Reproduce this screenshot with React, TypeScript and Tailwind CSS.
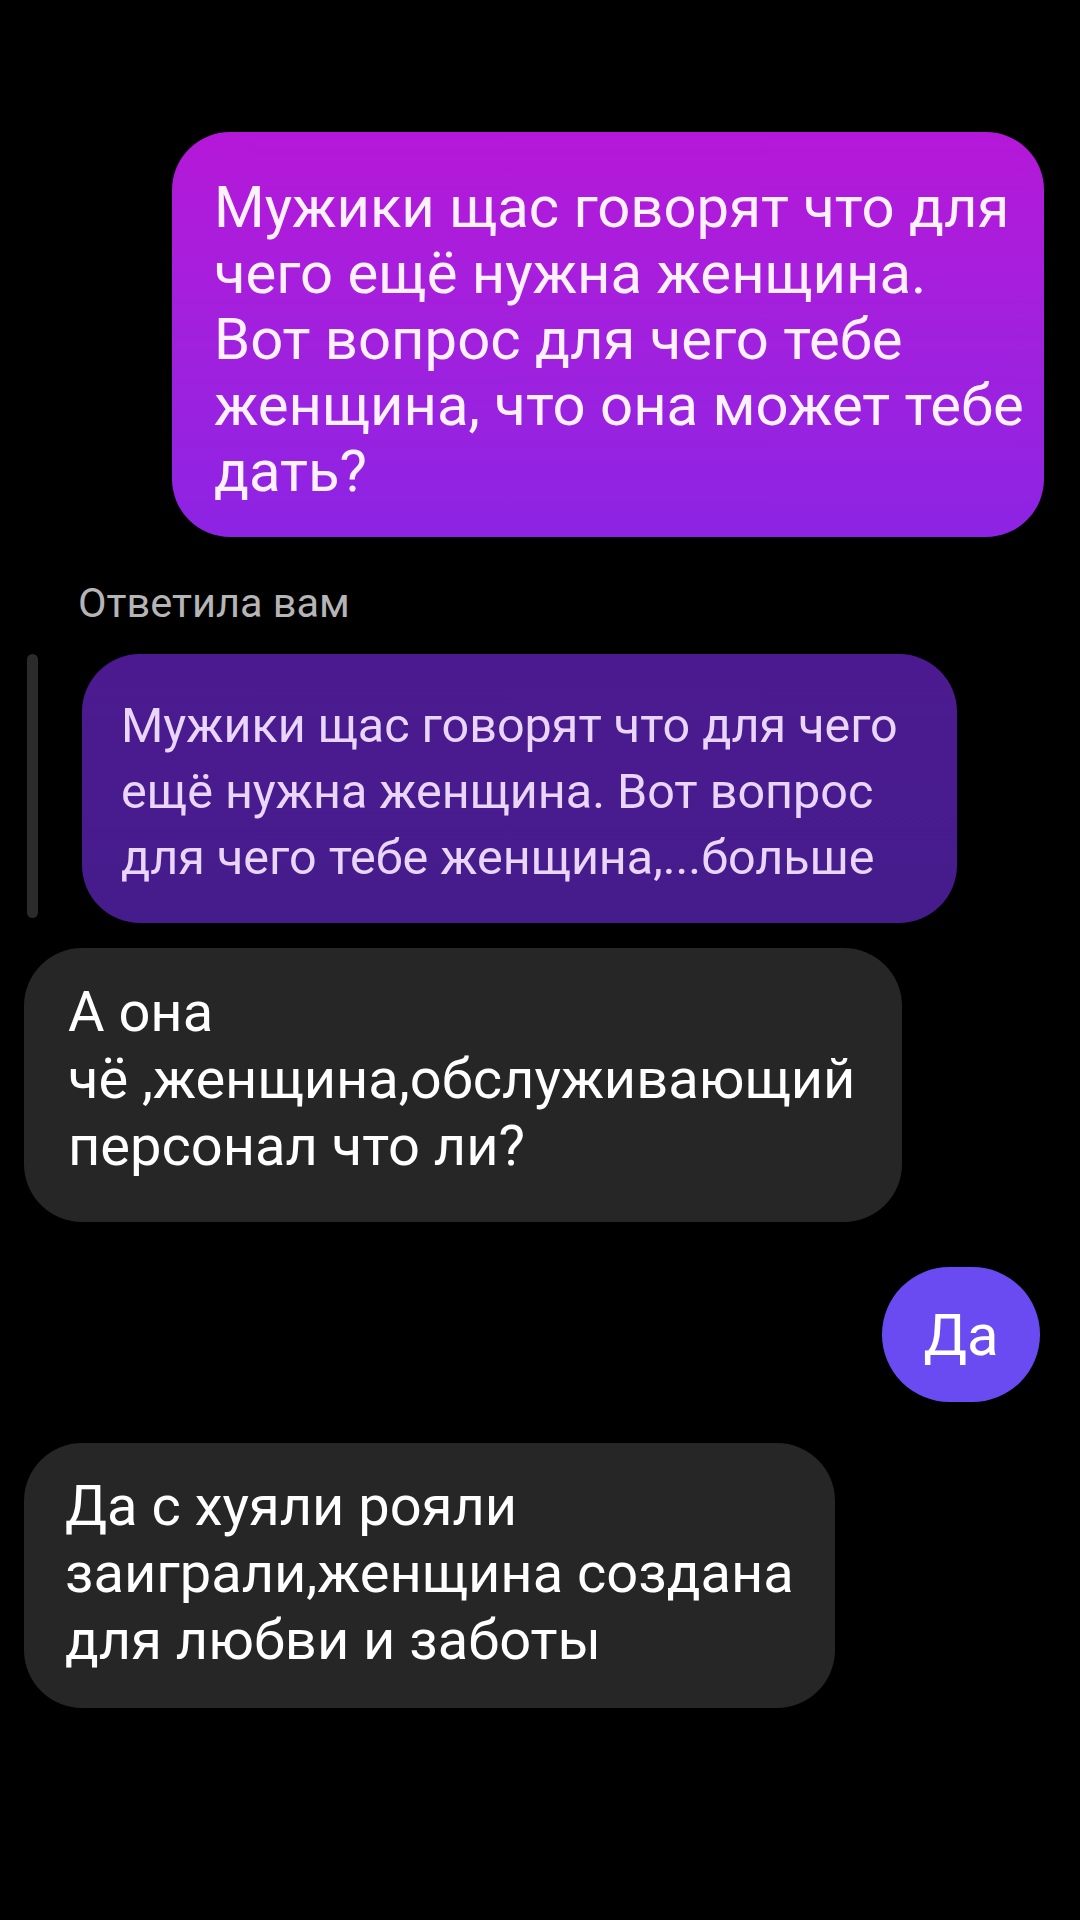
import React from "react";

const font = { fontFamily: "Roboto, 'Noto Sans', sans-serif" };

function Lines({ lines }: { lines: string[] }) {
  return (
    <>
      {lines.map((l, i) => (
        <div key={i} className="whitespace-nowrap">
          {l}
        </div>
      ))}
    </>
  );
}

export default function App() {
  return (
    <div className="w-[1080px] h-[1920px] bg-black flex flex-col overflow-hidden" style={font}>
      {/* Bubble 1 (outgoing, gradient) */}
      <div className="mt-[132px] self-end mr-[36px] w-[872px] h-[405px] rounded-[58px] bg-gradient-to-b from-[#b517d8] to-[#8d23e3] pl-[42px] pt-[42px] text-[58px] leading-[66px] text-[#fdf0ff]">
        <Lines
          lines={[
            "Мужики щас говорят что для",
            "чего ещё нужна женщина.",
            "Вот вопрос для чего тебе",
            "женщина, что она может тебе",
            "дать?",
          ]}
        />
      </div>

      {/* Reply label */}
      <div className="mt-[42px] ml-[78px] h-[48px] text-[41.5px] leading-[48px] text-[#b5b5b5] whitespace-nowrap">
        Ответила вам
      </div>

      {/* Quoted reply */}
      <div className="mt-[27px] flex flex-row h-[269px]">
        <div className="ml-[27px] w-[11px] h-[264px] rounded-full bg-[#2b2b2b]" />
        <div className="ml-[44px] w-[875px] h-[269px] rounded-[58px] bg-gradient-to-b from-[#4c1a90] to-[#451c8c] pl-[39px] pt-[39px] text-[48.5px] leading-[66px] text-[#ead6fb]">
          <Lines
            lines={[
              "Мужики щас говорят что для чего",
              "ещё нужна женщина. Вот вопрос",
              "для чего тебе женщина,...больше",
            ]}
          />
        </div>
      </div>

      {/* Incoming grey bubble */}
      <div className="mt-[25px] ml-[24px] w-[878px] h-[274px] rounded-[58px] bg-[#262626] pl-[44px] pt-[31px] text-[56px] leading-[67px] text-white">
        <Lines lines={["А она", "чё ,женщина,обслуживающий", "персонал что ли?"]} />
      </div>

      {/* Да bubble */}
      <div className="mt-[45px] self-end mr-[40px] w-[158px] h-[135px] rounded-full bg-[#6a4bf1] flex items-center justify-center text-[58px] leading-[66px] text-white">
        Да
      </div>

      {/* Incoming grey bubble 2 */}
      <div className="mt-[41px] ml-[24px] w-[811px] h-[265px] rounded-[58px] bg-[#262626] pl-[41px] pt-[30px] text-[56px] leading-[67px] text-white">
        <Lines lines={["Да с хуяли рояли", "заиграли,женщина создана", "для любви и заботы"]} />
      </div>
    </div>
  );
}
